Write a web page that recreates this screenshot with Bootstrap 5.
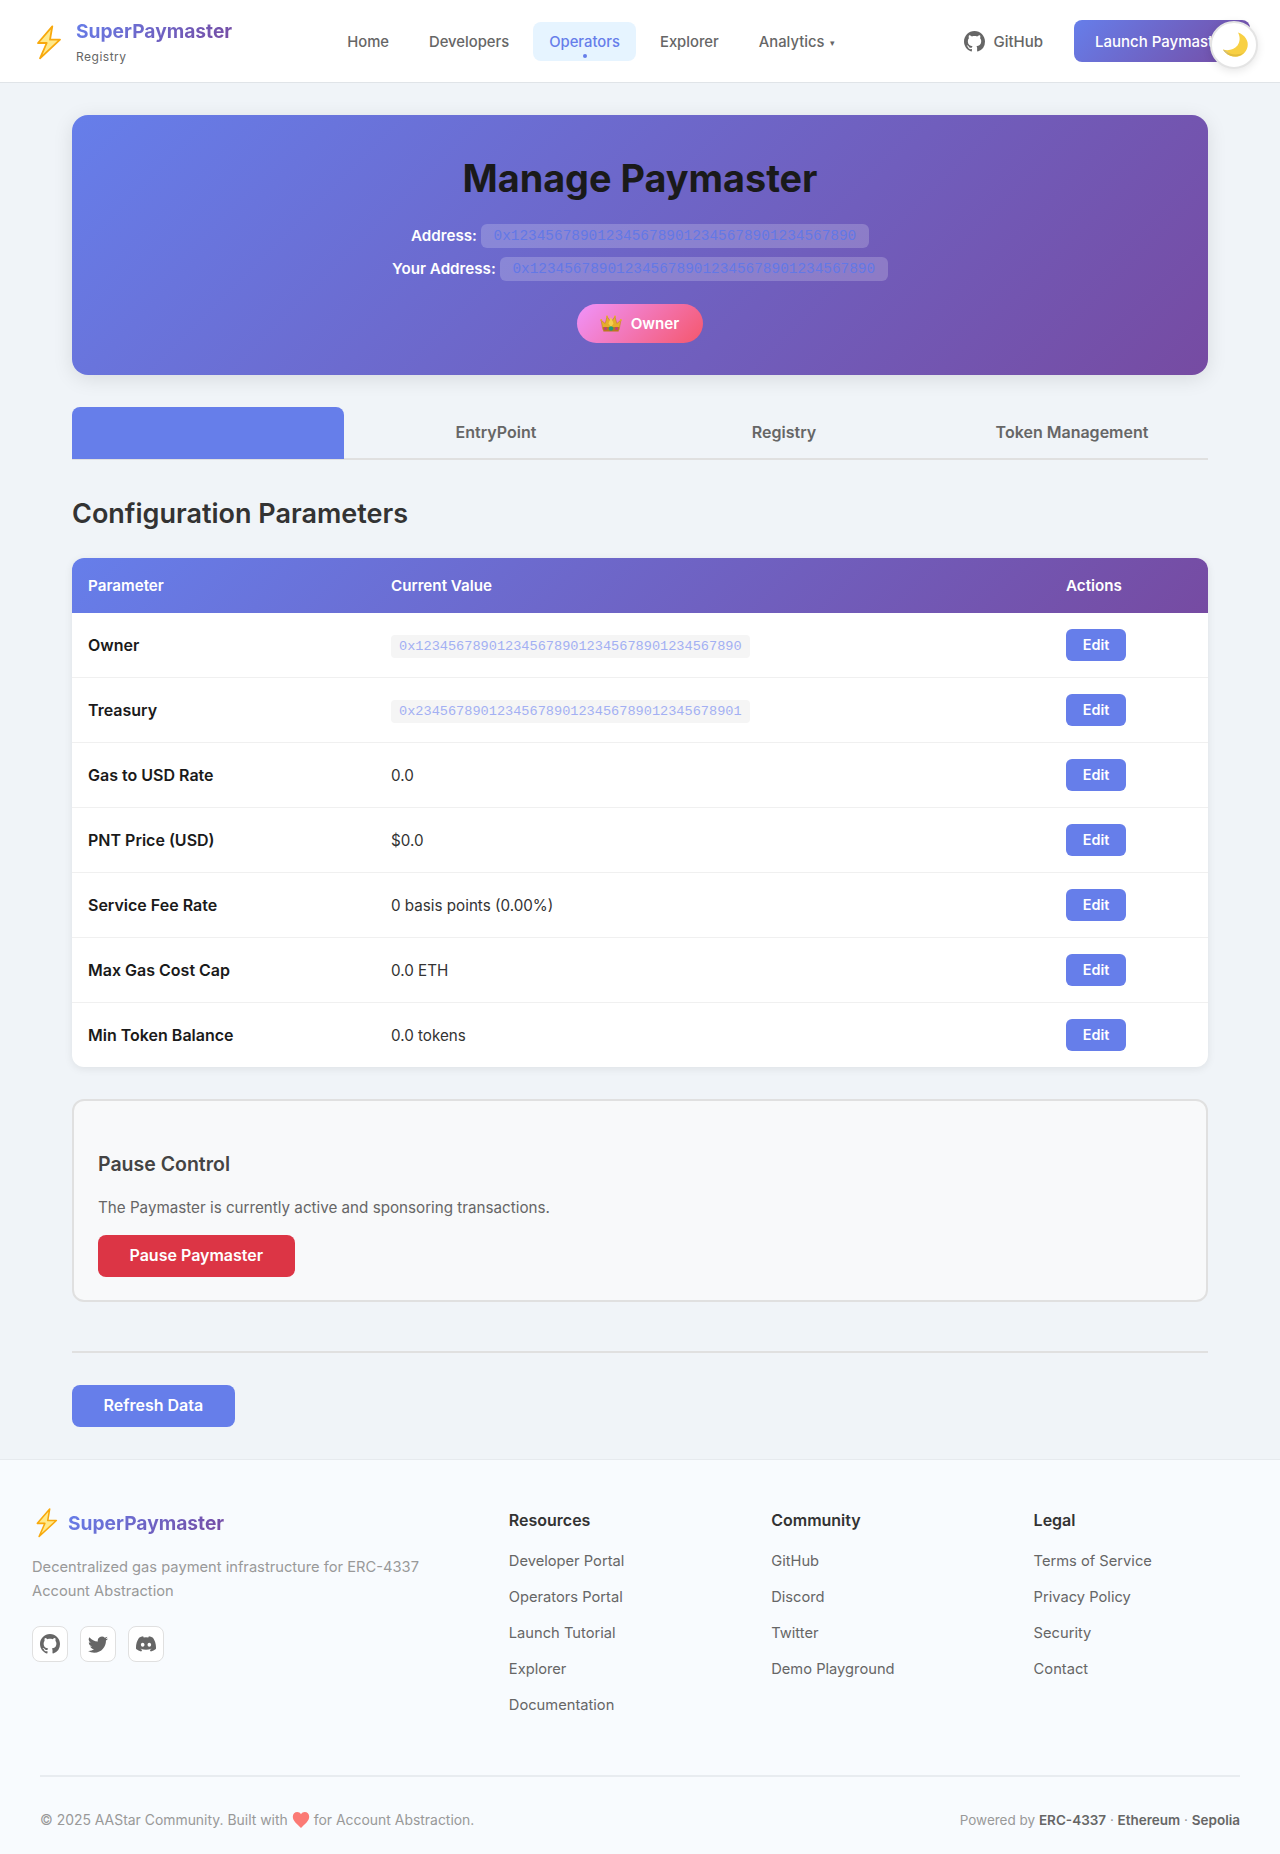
<!DOCTYPE html>
<html lang="en">
<head>
    <meta charset="UTF-8">
    <title>Manage Paymaster</title>
    <link href="https://cdn.jsdelivr.net/npm/bootstrap@5.3.0/dist/css/bootstrap.min.css" rel="stylesheet">
    <style>
        body { font-family: Inter, "Liberation Sans", sans-serif; background: #f0f4f8; color: #1a1a1a; }
        .grad-text { background: linear-gradient(135deg, #667eea, #764ba2); -webkit-background-clip: text; background-clip: text; color: transparent; }

        /* header */
        .top-bar { height: 83px; background: #fff; border-bottom: 1px solid #e0e4e8; padding: 0 30px 0 32px; }
        .brand-wrap { gap: 12px; margin-top: 2px; }
        .brand-name { font-size: 19.2px; font-weight: 700; line-height: 24px; }
        .brand-sub { font-size: 12px; color: #666; letter-spacing: .5px; line-height: 16px; margin-top: 6px; }
        .main-links { margin-left: 99px; gap: 8px; }
        .main-links .nav-link { font-size: 14.8px; font-weight: 500; color: #666; padding: 10px 16px 8px; line-height: 20px; border-radius: 8px; position: relative; }
        .main-links .nav-link.active { color: #667eea; background: #e6f4ff; }
        .main-links .nav-link.active::after { content: ""; position: absolute; left: 50%; bottom: 3px; width: 4px; height: 4px; margin-left: -2px; border-radius: 50%; background: #667eea; }
        .caret-mark { font-size: 9px; margin-left: 2px; vertical-align: 1px; }
        .gh-link { font-size: 15px; font-weight: 500; color: #666; text-decoration: none; gap: 8px; }
        .gh-link span { padding-top: 2px; }
        .launch-btn { width: 176px; text-align: left; background: linear-gradient(135deg, #667eea, #764ba2); color: #fff; font-size: 15px; font-weight: 500; padding: 11px 21px 9px; border: 0; border-radius: 8px; line-height: 22px; margin-left: 31px; white-space: nowrap; overflow: hidden; }
        .theme-toggle { position: fixed; top: 21px; left: 1210px; width: 48px; height: 48px; border-radius: 50%; background: #fff; border: 2px solid #e4e4e4; box-shadow: 0 2px 8px rgba(0,0,0,.1); z-index: 10; }

        /* hero */
        .page-wrap { width: 1136px; margin: 0 auto; padding-top: 32px; }
        .hero-box { height: 260px; background: linear-gradient(135deg, #667eea, #764ba2); border-radius: 16px; box-shadow: 0 4px 20px rgba(0,0,0,.1); padding-top: 39px; text-align: center; }
        .hero-box h1 { font-size: 37.8px; font-weight: 700; line-height: 48px; margin: 0 0 22px; color: #1a1a1a; }
        .addr-line { color: #fff; font-size: 15.2px; font-weight: 600; line-height: 24px; margin-bottom: 9px; }
        .addr-line code { display: inline-block; font-family: "Liberation Mono", monospace; font-size: 14.4px; font-weight: 400; line-height: 24px; color: #6378e6; background: rgba(255,255,255,.2); padding: 0 12.8px; border-radius: 6px; vertical-align: top; }
        .role-pill { display: inline-flex; align-items: center; gap: 9px; height: 39px; margin-top: 14px; padding: 0 24px 0 23px; border-radius: 20px; font-size: 15.2px; font-weight: 600; color: #fff; background: linear-gradient(135deg, #f093fb, #f5576c); }
        .role-pill span { padding-top: 2px; }

        /* tabs */
        .tab-row { margin-top: 32px; gap: 16px; border-bottom: 2px solid #e0e0e0; height: 53px; }
        .tab-item { flex: 1; height: 52px; border: 0; background: transparent; font-size: 16px; font-weight: 600; color: #666; border-radius: 8px 8px 0 0; padding-bottom: 4px; }
        .tab-item.active { background: #667eea; color: #667eea; }
        .section-title { font-size: 27px; font-weight: 600; color: #333; line-height: 34px; margin: 37px 0 27px; }

        /* table */
        .param-box { background: #fff; border-radius: 12px; overflow: hidden; box-shadow: 0 2px 8px rgba(0,0,0,.08); }
        .param-table { margin: 0; font-size: 15.2px; line-height: 24px; table-layout: fixed; border-collapse: separate; border-spacing: 0; }
        .col-name { width: 303px; }
        .col-act { width: 158px; }
        .param-table thead th { background: transparent; color: #fff; font-size: 15.2px; line-height: 24px; font-weight: 600; height: 55px; padding: 1px 16px 0; vertical-align: middle; border: 0; }
        .param-table thead tr { background: linear-gradient(135deg, #667eea, #764ba2); }
        .param-table td { height: 65px; padding: 0 16px; vertical-align: middle; color: #333; border-bottom: 1px solid #f0f0f0; }
        .param-table td:nth-child(2) { padding-top: 2px; }
        .param-table tr:last-child td { border-bottom: 0; height: 64px; }
        .param-table td:first-child { font-size: 16px; font-weight: 600; color: #1a1a1a; }
        .hash-chip { display: inline-block; font-family: "Liberation Mono", monospace; font-size: 13.6px; line-height: 23px; height: 23px; padding: 0 8px; background: #f5f5f5; color: #a3b0f3; border-radius: 4px; vertical-align: middle; }
        .edit-btn { background: #667eea; color: #fff; font-size: 14.4px; font-weight: 600; width: 60px; height: 32px; padding: 0; border: 0; border-radius: 6px; line-height: 32px; }

        /* pause */
        .pause-box { margin-top: 32px; height: 203px; background: #f8f9fa; border: 2px solid #e0e0e0; border-radius: 12px; padding: 51px 24px 0; }
        .pause-box h3 { font-size: 19.5px; font-weight: 600; line-height: 24px; color: #444; margin: 0 0 20px; }
        .pause-box p { font-size: 15.2px; line-height: 24px; color: #666; margin: 0 0 15px; }
        .wide-btn { font-size: 16px; font-weight: 600; color: #fff; height: 42px; padding: 0 31.5px 2px; border: 0; border-radius: 8px; line-height: 40px; }
        .pause-btn { background: #dc3545; }
        .refresh-btn { background: #667eea; }
        .sep-line { margin: 49px 0 32px; border: 0; border-top: 2px solid #e0e0e0; opacity: 1; }

        /* footer */
        .site-foot { margin-top: 32px; height: 395px; background: #f8fbfe; border-top: 1px solid #e6eaee; padding: 47px 32px 0; }
        .foot-cols { display: grid; grid-template-columns: 2fr 1fr 1fr 1fr; gap: 48px; height: 268px; }
        .foot-brand { font-size: 19.2px; font-weight: 700; line-height: 24px; gap: 8px; }
        .foot-desc { font-size: 14.7px; line-height: 24px; color: #999; margin: 17px 0 23px; }
        .social-row { gap: 12px; }
        .social-box { width: 36px; height: 36px; background: #fff; border: 1px solid #e0e0e0; border-radius: 8px; color: #666; }
        .foot-head { font-size: 16px; font-weight: 600; color: #333; line-height: 24px; margin: 1px 0 17px; }
        .foot-list { list-style: none; padding: 0; margin: 0; }
        .foot-list li { font-size: 14.7px; line-height: 24px; margin-bottom: 12.1px; }
        .foot-list a { color: #666; text-decoration: none; }
        .foot-bottom { margin: 0 8px; border-top: 2px solid #e8ecf0; padding-top: 32px; font-size: 13.5px; color: #999; line-height: 22px; }
        .foot-bottom strong { color: #666; font-weight: 600; }
        .copy-line { font-size: 13.93px; gap: 4px; }
    </style>
</head>
<body>

<!-- Top navigation -->
<header class="top-bar d-flex align-items-center">
    <div class="brand-wrap d-flex align-items-center">
        <svg width="32" height="36" viewBox="0 0 32 36"><use href="#bolt"/></svg>
        <div>
            <div class="brand-name"><span class="grad-text">SuperPaymaster</span></div>
            <div class="brand-sub">Registry</div>
        </div>
    </div>
    <nav class="nav main-links">
        <a class="nav-link" href="#">Home</a>
        <a class="nav-link" href="#">Developers</a>
        <a class="nav-link active" href="#">Operators</a>
        <a class="nav-link" href="#">Explorer</a>
        <a class="nav-link" href="#">Analytics <span class="caret-mark">▾</span></a>
    </nav>
    <div class="d-flex align-items-center ms-auto">
        <a class="gh-link d-flex align-items-center" href="#">
            <svg width="21" height="21" viewBox="0 0 16 16" fill="currentColor"><use href="#gh"/></svg><span>GitHub</span>
        </a>
        <button class="launch-btn">Launch Paymaster</button>
    </div>
</header>

<button class="theme-toggle d-flex align-items-center justify-content-center p-0" aria-label="Toggle theme">
    <svg width="30" height="30" viewBox="0 0 30 30">
        <path d="M19 2.500C26 5 30 11 28.500 17 27 23.500 21 27.500 15 26.500 10 26 6 23 4 19.500 9 21 15 20 18.500 15.500 21 12 21.500 7 19 2.500Z" fill="#f8d043"/>
        <path d="M4 19.500C6 23 10 26 15 26.500 19 27 23 25 26 22 21 25 15 25 11 23.500 8 22.500 6 21 4 19.500Z" fill="#e3bd3c"/>
        <path d="M4 19.500C6 21 8 22.500 11 23.500 9 24 6 22.500 4 19.500Z" fill="#bdb8a8"/>
    </svg>
</button>

<svg width="0" height="0" class="position-absolute">
    <defs>
        <g id="bolt">
            <path d="M20.300 2.300 L6 19 H14.700 L8 34.300 L28 15.700 H18 Z" fill="#ffe98a" stroke="#f8a90c" stroke-width="1.800" stroke-linejoin="round"/>
        </g>
        <path id="gh" d="M8 0C3.58 0 0 3.58 0 8c0 3.54 2.29 6.53 5.47 7.59.4.07.55-.17.55-.38 0-.19-.01-.82-.01-1.49-2.01.37-2.53-.49-2.69-.94-.09-.23-.48-.94-.82-1.13-.28-.15-.68-.52-.01-.53.63-.01 1.08.58 1.23.82.72 1.21 1.87.87 2.33.66.07-.52.28-.87.51-1.07-1.78-.2-3.64-.89-3.64-3.95 0-.87.31-1.59.82-2.15-.08-.2-.36-1.02.08-2.12 0 0 .67-.21 2.2.82.64-.18 1.32-.27 2-.27.68 0 1.36.09 2 .27 1.53-1.04 2.2-.82 2.2-.82.44 1.1.16 1.92.08 2.12.51.56.82 1.27.82 2.15 0 3.07-1.87 3.75-3.65 3.95.29.25.54.73.54 1.48 0 1.07-.01 1.93-.01 2.2 0 .21.15.46.55.38A8.012 8.012 0 0 0 16 8c0-4.42-3.58-8-8-8z"/>
    </defs>
</svg>

<main class="page-wrap">
    <section class="hero-box">
        <h1>Manage Paymaster</h1>
        <div class="addr-line">Address: <code>0x1234567890123456789012345678901234567890</code></div>
        <div class="addr-line">Your Address: <code>0x1234567890123456789012345678901234567890</code></div>
        <div class="role-pill">
            <svg width="22" height="17" viewBox="0 0 22 17">
                <path d="M1 5l4.200 3.500L7 1.500l4 5.500 4-5.500 1.800 7L21 5l-1.800 9.500H2.800z" fill="#e5ad2a" stroke="#b77d1c" stroke-width=".5" stroke-linejoin="round"/>
                <path d="M11 2L8.500 8.500 11 12l2.500-3.500z" fill="#f4cf4e"/>
                <path d="M2.800 12h16.400l-.6 4.500H3.400z" fill="#b8791c"/>
                <circle cx="11" cy="13.500" r="2.200" fill="#1f9b7a"/>
                <circle cx="5.500" cy="13.500" r="1.500" fill="#c23a7e"/>
                <circle cx="16.500" cy="13.500" r="1.500" fill="#c23a7e"/>
                <circle cx="1.200" cy="5" r="1" fill="#e5ad2a"/>
                <circle cx="20.800" cy="5" r="1" fill="#e5ad2a"/>
                <circle cx="7" cy="1.500" r="1" fill="#e5ad2a"/>
                <circle cx="15" cy="1.500" r="1" fill="#e5ad2a"/>
            </svg>
            <span>Owner</span>
        </div>
    </section>

    <div class="tab-row d-flex">
        <button class="tab-item active">Configuration</button>
        <button class="tab-item">EntryPoint</button>
        <button class="tab-item">Registry</button>
        <button class="tab-item">Token Management</button>
    </div>

    <h2 class="section-title">Configuration Parameters</h2>

    <div class="param-box">
        <table class="table param-table">
            <colgroup><col class="col-name"><col><col class="col-act"></colgroup>
            <thead>
                <tr><th>Parameter</th><th>Current Value</th><th>Actions</th></tr>
            </thead>
            <tbody id="paramRows"></tbody>
        </table>
    </div>

    <section class="pause-box">
        <h3>Pause Control</h3>
        <p>The Paymaster is currently active and sponsoring transactions.</p>
        <button class="btn wide-btn pause-btn">Pause Paymaster</button>
    </section>

    <hr class="sep-line">

    <button class="btn wide-btn refresh-btn">Refresh Data</button>
</main>

<footer class="site-foot">
    <div class="foot-cols">
        <div>
            <div class="foot-brand d-flex align-items-center">
                <svg width="28" height="31" viewBox="0 0 32 36"><use href="#bolt"/></svg>
                <span class="grad-text">SuperPaymaster</span>
            </div>
            <p class="foot-desc">Decentralized gas payment infrastructure for ERC-4337 Account Abstraction</p>
            <div class="social-row d-flex">
                <a class="social-box d-flex align-items-center justify-content-center" href="#">
                    <svg width="20" height="20" viewBox="0 0 16 16" fill="currentColor"><use href="#gh"/></svg>
                </a>
                <a class="social-box d-flex align-items-center justify-content-center" href="#">
                    <svg width="20" height="20" viewBox="0 0 16 16" fill="currentColor"><path d="M5.026 15c6.038 0 9.341-5.003 9.341-9.334 0-.14 0-.282-.006-.422A6.685 6.685 0 0 0 16 3.542a6.658 6.658 0 0 1-1.889.518 3.301 3.301 0 0 0 1.447-1.817 6.533 6.533 0 0 1-2.087.793A3.286 3.286 0 0 0 7.875 6.03a9.325 9.325 0 0 1-6.767-3.429 3.289 3.289 0 0 0 1.018 4.382A3.323 3.323 0 0 1 .64 6.575v.045a3.288 3.288 0 0 0 2.632 3.218 3.203 3.203 0 0 1-.865.115 3.23 3.23 0 0 1-.614-.057 3.283 3.283 0 0 0 3.067 2.277A6.588 6.588 0 0 1 .78 13.58a6.32 6.32 0 0 1-.78-.045A9.344 9.344 0 0 0 5.026 15z"/></svg>
                </a>
                <a class="social-box d-flex align-items-center justify-content-center" href="#">
                    <svg width="20" height="20" viewBox="0 0 16 16" fill="currentColor"><path d="M13.545 2.907a13.227 13.227 0 0 0-3.257-1.011.05.05 0 0 0-.052.025c-.141.25-.297.577-.406.833a12.19 12.19 0 0 0-3.658 0 8.258 8.258 0 0 0-.412-.833.051.051 0 0 0-.052-.025c-1.125.194-2.22.534-3.257 1.011a.041.041 0 0 0-.021.018C.356 6.024-.213 9.047.066 12.032c.001.014.01.028.021.037a13.276 13.276 0 0 0 3.995 2.02.05.05 0 0 0 .056-.019c.308-.42.582-.863.818-1.329a.05.05 0 0 0-.01-.059.051.051 0 0 0-.018-.011 8.875 8.875 0 0 1-1.248-.595.05.05 0 0 1-.02-.066.051.051 0 0 1 .015-.019c.084-.063.168-.129.248-.195a.05.05 0 0 1 .051-.007c2.619 1.196 5.454 1.196 8.041 0a.052.052 0 0 1 .053.007c.08.066.164.132.248.195a.051.051 0 0 1-.004.085 8.254 8.254 0 0 1-1.249.594.05.05 0 0 0-.03.03.052.052 0 0 0 .003.041c.24.465.515.909.817 1.329a.05.05 0 0 0 .056.019 13.235 13.235 0 0 0 4.001-2.02.049.049 0 0 0 .021-.037c.334-3.451-.559-6.449-2.366-9.106a.034.034 0 0 0-.02-.019Zm-8.198 7.307c-.789 0-1.438-.724-1.438-1.612 0-.889.637-1.613 1.438-1.613.807 0 1.45.73 1.438 1.613 0 .888-.637 1.612-1.438 1.612Zm5.316 0c-.788 0-1.438-.724-1.438-1.612 0-.889.637-1.613 1.438-1.613.807 0 1.451.73 1.438 1.613 0 .888-.631 1.612-1.438 1.612Z"/></svg>
                </a>
            </div>
        </div>
        <div>
            <h4 class="foot-head">Resources</h4>
            <ul class="foot-list">
                <li><a href="#">Developer Portal</a></li>
                <li><a href="#">Operators Portal</a></li>
                <li><a href="#">Launch Tutorial</a></li>
                <li><a href="#">Explorer</a></li>
                <li><a href="#">Documentation</a></li>
            </ul>
        </div>
        <div>
            <h4 class="foot-head">Community</h4>
            <ul class="foot-list">
                <li><a href="#">GitHub</a></li>
                <li><a href="#">Discord</a></li>
                <li><a href="#">Twitter</a></li>
                <li><a href="#">Demo Playground</a></li>
            </ul>
        </div>
        <div>
            <h4 class="foot-head">Legal</h4>
            <ul class="foot-list">
                <li><a href="#">Terms of Service</a></li>
                <li><a href="#">Privacy Policy</a></li>
                <li><a href="#">Security</a></li>
                <li><a href="#">Contact</a></li>
            </ul>
        </div>
    </div>
    <div class="foot-bottom d-flex justify-content-between align-items-center">
        <span class="copy-line d-flex align-items-center">© 2025 AAStar Community. Built with
            <svg width="18" height="18" viewBox="0 0 18 18"><path d="M9 17C5 13 .8 10 .8 5.800.8 3 2.800 1 5.200 1 6.800 1 8.200 1.900 9 3.200 9.800 1.900 11.200 1 12.800 1 15.200 1 17.200 3 17.200 5.800 17.200 10 13 13 9 17z" fill="#fb7a75"/></svg>
            for Account Abstraction.</span>
        <span>Powered by <strong>ERC-4337</strong> · <strong>Ethereum</strong> · <strong>Sepolia</strong></span>
    </div>
</footer>

<script src="https://cdn.jsdelivr.net/npm/bootstrap@5.3.0/dist/js/bootstrap.bundle.min.js"></script>
<script>
  // Parameter rows
  const params = [
    ['Owner', '0x1234567890123456789012345678901234567890', true],
    ['Treasury', '0x2345678901234567890123456789012345678901', true],
    ['Gas to USD Rate', '0.0'],
    ['PNT Price (USD)', '$0.0'],
    ['Service Fee Rate', '0 basis points (0.00%)'],
    ['Max Gas Cost Cap', '0.0 ETH'],
    ['Min Token Balance', '0.0 tokens']
  ];

  const paramRows = document.getElementById('paramRows');
  params.forEach(p => {
    const tr = document.createElement('tr');
    const value = p[2] ? `<code class="hash-chip">${p[1]}</code>` : p[1];
    tr.innerHTML = `<td>${p[0]}</td><td>${value}</td><td><button class="btn edit-btn">Edit</button></td>`;
    paramRows.appendChild(tr);
  });
</script>

</body>
</html>
